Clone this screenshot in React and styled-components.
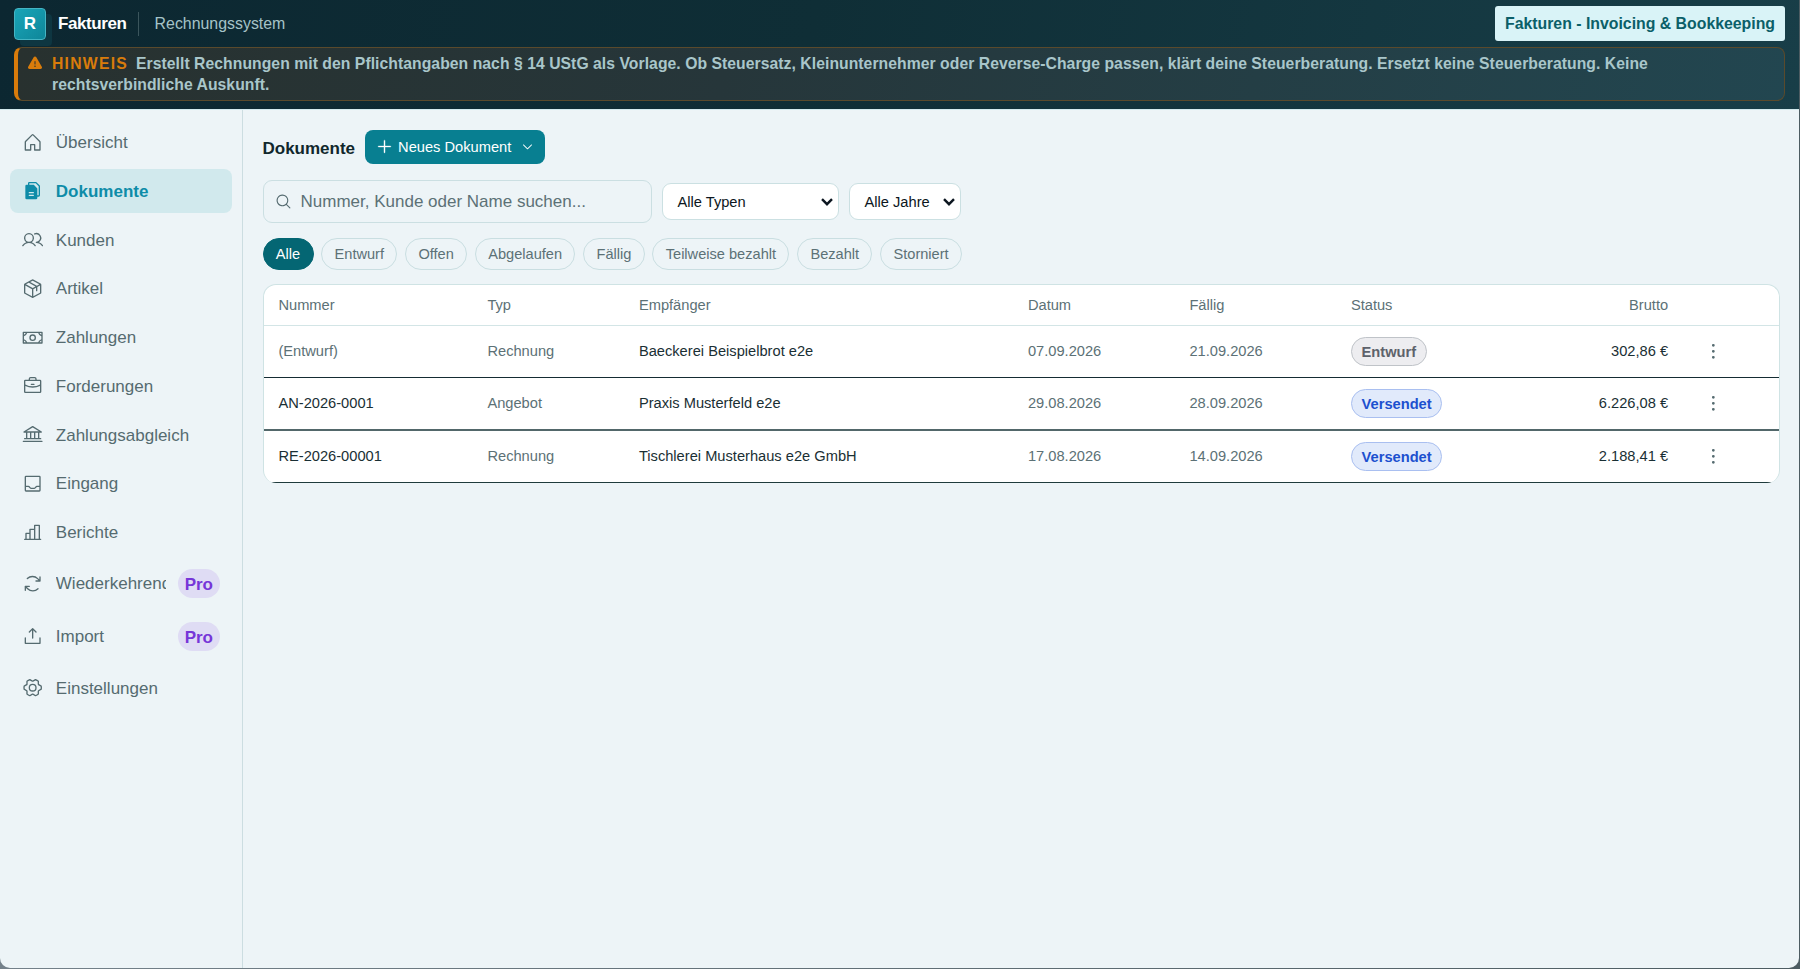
import React from 'react';
import styled, { createGlobalStyle, css } from 'styled-components';
import {
  PiHouse, PiFilesFill, PiUsers, PiPackage, PiMoney, PiBriefcase, PiBank, PiTray,
  PiChartBar, PiArrowsClockwise, PiUploadSimple, PiGearSix, PiWarningFill, PiPlus,
  PiCaretDown, PiMagnifyingGlass, PiDotsThreeVerticalBold,
} from 'react-icons/pi';

const GlobalStyle = createGlobalStyle`
  * { box-sizing: border-box; }
  body {
    margin: 0;
    background: linear-gradient(to right, #74818a, #4d5c62);
    font-family: "Liberation Sans", Arial, sans-serif;
    color: #10272c;
  }
  button, input { font-family: inherit; }
`;

const Window = styled.div`
  width: 1799px;
  height: 968px;
  display: flex;
  flex-direction: column;
  overflow: hidden;
  border-radius: 0 0 10px 10px;
  background: #edf4f7;
`;

const Header = styled.header`
  height: 110px;
  flex: none;
  padding: 6px 14px 0;
  display: flex;
  flex-direction: column;
  gap: 6px;
  background: linear-gradient(100deg, #0c2731 0%, #0f2e36 45%, #183e48 100%);
  border-bottom: 1px solid #d3eaee;
`;

const Brand = styled.div`
  height: 35px;
  display: flex;
  align-items: center;
`;

const Logo = styled.div`
  width: 32px;
  height: 32px;
  margin-right: 12px;
  display: grid;
  place-items: center;
  border-radius: 4px;
  border: 1px solid #45b5c4;
  background: linear-gradient(135deg, #1aa5b8, #0e8699);
  box-shadow: 6px 6px 0 #0e3641;
  color: #fff;
  font-size: 17px;
  font-weight: 700;
`;

const BrandName = styled.strong`
  font-size: 17px;
  letter-spacing: -0.4px;
  color: #fff;
`;

const BrandSub = styled.span`
  margin-left: 11.5px;
  padding-left: 15.5px;
  height: 24px;
  line-height: 24px;
  border-left: 1px solid #3b555c;
  font-size: 15.9px;
  color: #a5c3c8;
`;

const ProductTag = styled.div`
  height: 35px;
  margin-left: auto;
  padding: 0 10px;
  line-height: 35px;
  border-radius: 3px;
  background: #d9f3f7;
  color: #0b5f69;
  font-size: 15.83px;
  font-weight: 700;
`;

const Notice = styled.div`
  height: 54px;
  padding: 5px 14px 0 9px;
  display: flex;
  gap: 9px;
  border: 1px solid #5a4a2c;
  border-left: 4px solid #d97c0b;
  border-radius: 8px;
  background: linear-gradient(100deg, #28312f 0%, #26363a 40%, #224650 100%);
  color: #a9c6ca;
  font-size: 15.73px;
  font-weight: 700;
  letter-spacing: 0.05px;
  line-height: 21.3px;
  svg { flex: none; margin-top: 2px; color: #d97c0b; }
`;

const NoticeLabel = styled.span`
  margin-right: 8px;
  letter-spacing: 1.25px;
  color: #d97c0b;
`;

const Body = styled.div`
  flex: 1;
  display: flex;
  min-height: 0;
`;

const Sidebar = styled.nav`
  width: 243px;
  flex: none;
  padding: 10.7px 10px 0 9.5px;
  display: flex;
  flex-direction: column;
  gap: 5.42px;
  border-right: 1px solid #ccdde1;
`;

const NavItem = styled.a`
  height: ${(p) => (p.$pro ? 48 : 43.33)}px;
  flex: none;
  padding: 0 12px;
  display: flex;
  align-items: center;
  gap: 13px;
  border-radius: 8px;
  font-size: 17px;
  color: #556b70;
  svg { flex: none; }
  ${(p) => p.$active && css`
    background: #d1e9ed;
    color: #0e8ca8;
    font-weight: 700;
  `}
`;

const NavLabel = styled.span`
  flex: 1;
  padding-top: 1.5px;
  overflow: hidden;
  white-space: nowrap;
  line-height: 24px;
`;

const ProBadge = styled.span`
  height: 29.3px;
  margin-left: -1px;
  padding: 0 7px;
  line-height: 31px;
  border-radius: 15px;
  background: #dfdcf4;
  color: #7636d8;
  font-weight: 700;
`;

const Main = styled.main`
  flex: 1;
  padding: 19.5px 19.5px 0 19.5px;
  min-width: 0;
`;

const TitleRow = styled.div`
  display: flex;
  align-items: center;
  gap: 9.5px;
`;

const Title = styled.h1`
  margin: 4px 0 0;
  font-size: 17px;
  line-height: 24px;
`;

const PrimaryButton = styled.button`
  height: 34px;
  width: 180px;
  padding: 0 11px;
  display: flex;
  align-items: center;
  border: 0;
  border-radius: 8px;
  background: #087f91;
  color: #fff;
  font-size: 14.67px;
  span { margin: 0 auto 0 5.5px; }
`;

const Filters = styled.div`
  margin-top: 16px;
  display: flex;
  align-items: center;
  gap: 10px;
`;

const SearchBox = styled.label`
  width: 389px;
  height: 43px;
  padding: 0 11.5px;
  display: flex;
  align-items: center;
  gap: 8.5px;
  border: 1px solid #cbdfe2;
  border-radius: 9px;
  color: #556b70;
`;

const SearchInput = styled.input`
  flex: 1;
  min-width: 0;
  padding: 2px 0 0;
  border: 0;
  outline: 0;
  background: none;
  font-size: 17px;
  color: #10272c;
  &::placeholder { color: #5c7176; opacity: 1; }
`;

const Select = styled.button`
  width: ${(p) => p.$width}px;
  height: 37px;
  padding: 1px 4.5px 0 15px;
  display: flex;
  align-items: center;
  justify-content: space-between;
  border: 1px solid #cbe0e2;
  border-radius: 9px;
  background: #fff;
  color: #0c1620;
  font-size: 14.67px;
`;

const Chips = styled.div`
  margin-top: 15px;
  display: flex;
  gap: 7.7px;
`;

const Chip = styled.button`
  height: 32px;
  padding: 0 12.35px;
  border: 1px solid ${(p) => (p.$active ? '#046673' : '#c9dee1')};
  border-radius: 16px;
  background: ${(p) => (p.$active ? '#046673' : 'transparent')};
  color: ${(p) => (p.$active ? '#fff' : '#5c7176')};
  font-size: 14.6px;
`;

const Card = styled.div`
  margin-top: 14.5px;
  overflow: hidden;
  border: 1px solid #cfe3e4;
  border-bottom-width: 0;
  border-radius: 13px;
  background: #fff;
`;

const Table = styled.table`
  width: 100%;
  table-layout: fixed;
  border-collapse: separate;
  border-spacing: 0;
  font-size: 14.67px;
`;

const HeadCell = styled.th`
  height: 41px;
  padding: 0 14.9px;
  border-bottom: 1px solid #d3e5e6;
  text-align: ${(p) => p.$align || 'left'};
  font-weight: 400;
  color: #5c7176;
`;

const Cell = styled.td`
  height: ${(p) => p.$height}px;
  padding: 0 14.9px 1px;
  border-bottom: ${(p) => p.$line};
  text-align: ${(p) => p.$align || 'left'};
  color: ${(p) => (p.$muted ? '#5c7176' : '#1a2f34')};
  svg { display: block; margin-left: 4.5px; color: #556b70; }
`;

const Status = styled.span`
  display: inline-block;
  height: 29px;
  padding: 0 9.7px;
  line-height: 28px;
  vertical-align: middle;
  border-radius: 15px;
  border: 1px solid ${(p) => (p.$sent ? '#a9bff0' : '#bfc3c8')};
  background: ${(p) => (p.$sent ? '#e1eafb' : '#ededf0')};
  color: ${(p) => (p.$sent ? '#1d50cf' : '#5d626b')};
  font-weight: 700;
`;

const NAV = [
  [PiHouse, 'Übersicht'],
  [PiFilesFill, 'Dokumente', 'active'],
  [PiUsers, 'Kunden'],
  [PiPackage, 'Artikel'],
  [PiMoney, 'Zahlungen'],
  [PiBriefcase, 'Forderungen'],
  [PiBank, 'Zahlungsabgleich'],
  [PiTray, 'Eingang'],
  [PiChartBar, 'Berichte'],
  [PiArrowsClockwise, 'Wiederkehrend', 'pro'],
  [PiUploadSimple, 'Import', 'pro'],
  [PiGearSix, 'Einstellungen'],
];

const CHIPS = ['Alle', 'Entwurf', 'Offen', 'Abgelaufen', 'Fällig', 'Teilweise bezahlt', 'Bezahlt', 'Storniert'];

const ROWS = [
  { nr: '(Entwurf)', typ: 'Rechnung', name: 'Baeckerei Beispielbrot e2e', date: '07.09.2026', due: '21.09.2026', status: 'Entwurf', sum: '302,86 €', h: 52, line: '1px solid #152c33' },
  { nr: 'AN-2026-0001', typ: 'Angebot', name: 'Praxis Musterfeld e2e', date: '29.08.2026', due: '28.09.2026', status: 'Versendet', sum: '6.226,08 €', h: 53, line: '2px solid #52676a' },
  { nr: 'RE-2026-00001', typ: 'Rechnung', name: 'Tischlerei Musterhaus e2e GmbH', date: '17.08.2026', due: '14.09.2026', status: 'Versendet', sum: '2.188,41 €', h: 52, line: '1px solid #1f3b3c' },
];

const Chevron = () => (
  <svg width="12" height="8" viewBox="0 0 12 8" fill="none" stroke="#0c1620" strokeWidth="2.4">
    <path d="M1 1.2 6 6.2 11 1.2" />
  </svg>
);

export default function App() {
  return (
    <>
      <GlobalStyle />
      <Window>
        <Header>
          <Brand>
            <Logo>R</Logo>
            <BrandName>Fakturen</BrandName>
            <BrandSub>Rechnungssystem</BrandSub>
            <ProductTag>Fakturen - Invoicing &amp; Bookkeeping</ProductTag>
          </Brand>
          <Notice>
            <PiWarningFill size={16} />
            <div>
              <NoticeLabel>HINWEIS</NoticeLabel>
              Erstellt Rechnungen mit den Pflichtangaben nach § 14 UStG als Vorlage. Ob Steuersatz, Kleinunternehmer oder Reverse-Charge passen, klärt deine Steuerberatung. Ersetzt keine Steuerberatung. Keine rechtsverbindliche Auskunft.
            </div>
          </Notice>
        </Header>
        <Body>
          <Sidebar>
            {NAV.map(([Icon, label, kind]) => (
              <NavItem key={label} $active={kind === 'active'} $pro={kind === 'pro'}>
                <Icon size={21.33} />
                <NavLabel>{label}</NavLabel>
                {kind === 'pro' && <ProBadge>Pro</ProBadge>}
              </NavItem>
            ))}
          </Sidebar>
          <Main>
            <TitleRow>
              <Title>Dokumente</Title>
              <PrimaryButton>
                <PiPlus size={17} strokeWidth={5} />
                <span>Neues Dokument</span>
                <PiCaretDown size={13} />
              </PrimaryButton>
            </TitleRow>
            <Filters>
              <SearchBox>
                <PiMagnifyingGlass size={17} />
                <SearchInput placeholder="Nummer, Kunde oder Name suchen..." />
              </SearchBox>
              <Select $width={177}>Alle Typen<Chevron /></Select>
              <Select $width={112}>Alle Jahre<Chevron /></Select>
            </Filters>
            <Chips>
              {CHIPS.map((c, i) => <Chip key={c} $active={i === 0}>{c}</Chip>)}
            </Chips>
            <Card>
              <Table>
                <colgroup>
                  <col style={{ width: 209 }} />
                  <col style={{ width: 151.5 }} />
                  <col style={{ width: 389 }} />
                  <col style={{ width: 161.5 }} />
                  <col style={{ width: 161.5 }} />
                  <col style={{ width: 170 }} />
                  <col style={{ width: 177 }} />
                  <col />
                </colgroup>
                <thead>
                  <tr>
                    <HeadCell>Nummer</HeadCell>
                    <HeadCell>Typ</HeadCell>
                    <HeadCell>Empfänger</HeadCell>
                    <HeadCell>Datum</HeadCell>
                    <HeadCell>Fällig</HeadCell>
                    <HeadCell>Status</HeadCell>
                    <HeadCell $align="right">Brutto</HeadCell>
                    <HeadCell />
                  </tr>
                </thead>
                <tbody>
                  {ROWS.map((r) => (
                    <tr key={r.nr}>
                      <Cell $line={r.line} $height={r.h} $muted={r.status === 'Entwurf'}>{r.nr}</Cell>
                      <Cell $line={r.line} $muted>{r.typ}</Cell>
                      <Cell $line={r.line}>{r.name}</Cell>
                      <Cell $line={r.line} $muted>{r.date}</Cell>
                      <Cell $line={r.line} $muted>{r.due}</Cell>
                      <Cell $line={r.line}><Status $sent={r.status === 'Versendet'}>{r.status}</Status></Cell>
                      <Cell $line={r.line} $align="right">{r.sum}</Cell>
                      <Cell $line={r.line}><PiDotsThreeVerticalBold size={22.67} /></Cell>
                    </tr>
                  ))}
                </tbody>
              </Table>
            </Card>
          </Main>
        </Body>
      </Window>
    </>
  );
}
